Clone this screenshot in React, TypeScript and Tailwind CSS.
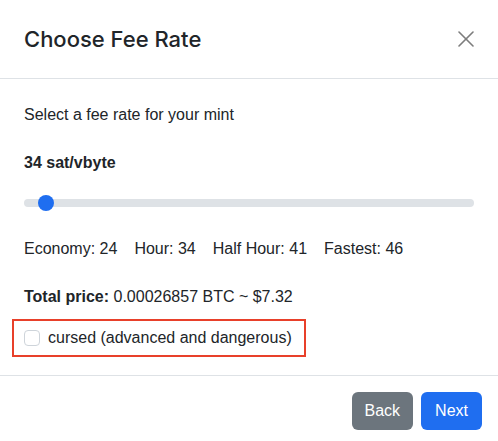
export default function App() {
  return (
    <div className="w-[498px] bg-white text-[16px] leading-6 text-[#212529] [font-family:'Liberation_Sans',Arial,sans-serif]">
      {/* header */}
      <div className="flex items-center justify-between border-b border-[#dee2e6] p-6">
        <h5 className="text-[22px] font-medium leading-[30px] [font-family:Inter,'Liberation_Sans',sans-serif]">
          Choose Fee Rate
        </h5>
        <button className="flex h-4 w-4 items-center justify-center" aria-label="Close">
          <svg width="16" height="16" viewBox="0 0 16 16" stroke="#7d7d7d" strokeWidth="1.6" strokeLinecap="round">
            <line x1="1" y1="1" x2="15" y2="15" />
            <line x1="15" y1="1" x2="1" y2="15" />
          </svg>
        </button>
      </div>

      {/* body */}
      <div className="px-6 pt-6 pb-[18px]">
        <p className="mb-6">Select a fee rate for your mint</p>
        <div className="mb-4 font-bold">34 sat/vbyte</div>

        {/* slider */}
        <div className="flex h-6 items-center">
          <div className="relative h-2 w-full rounded-full bg-[#dee2e6]">
            <div className="absolute top-1/2 left-[14px] h-4 w-4 -translate-y-1/2 rounded-full bg-[#1f6ef0]" />
          </div>
        </div>

        <div className="mt-[22px] flex gap-[17px]">
          <span>Economy: 24</span>
          <span>Hour: 34</span>
          <span>Half Hour: 41</span>
          <span>Fastest: 46</span>
        </div>

        <div className="mt-6">
          <span className="font-bold">Total price:</span> 0.00026857 BTC ~ $7.32
        </div>

        <div className="-mx-3 mt-[10px] flex w-[294px] items-center gap-2 border-2 border-[#e8402a] px-[10px] py-[5px]">
          <span className="h-4 w-4 rounded-[4px] border border-[#ced4da] bg-white" />
          <span>cursed (advanced and dangerous)</span>
        </div>
      </div>

      {/* footer */}
      <div className="flex justify-end gap-2 border-t border-[#dee2e6] px-4 pt-4 pb-[11px]">
        <button className="rounded-md bg-[#6c757d] px-[13px] py-[7px] leading-6 text-white">Back</button>
        <button className="rounded-md bg-[#1f6ef0] px-[14px] py-[7px] leading-6 text-white">Next</button>
      </div>
    </div>
  );
}
